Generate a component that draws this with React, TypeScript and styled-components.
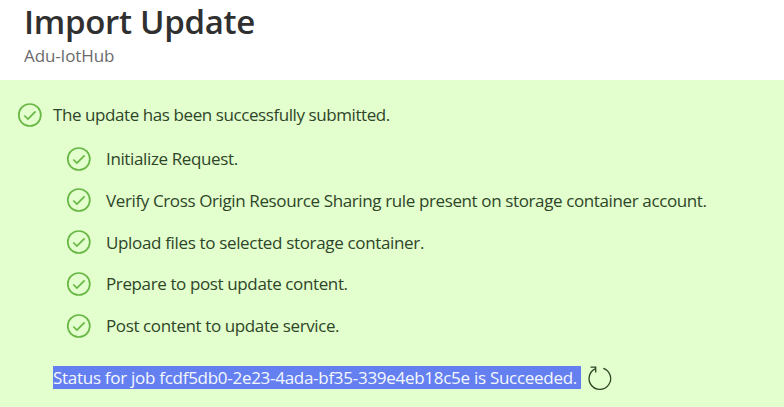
import React from "react";
import styled, { createGlobalStyle } from "styled-components";

const GlobalStyle = createGlobalStyle`
  html, body { margin: 0; background: #fff; }
  body { font-family: "Open Sans", "Noto Sans", sans-serif; overflow: hidden; }
`;

const Page = styled.main`
  width: 784px;
  height: 407px;
  display: flex;
  flex-direction: column;
  overflow: hidden;
`;

const Header = styled.header`
  height: 80px;
  flex: none;
  padding-left: 24px;
  box-sizing: border-box;
`;

const Title = styled.h1`
  margin: 0;
  height: 44px;
  line-height: 43px;
  font-size: 33px;
  font-weight: 600;
  letter-spacing: -0.3px;
  color: #303030;
  white-space: nowrap;
`;

const Subtitle = styled.div`
  height: 24px;
  line-height: 24px;
  font-size: 17px;
  letter-spacing: -0.12px;
  color: #6b6b6b;
  white-space: nowrap;
`;

const Panel = styled.section`
  flex: 1;
  background: #e2ffcd;
  padding: 22px 0 0 17px;
`;

const Row = styled.div<{ $gap: number }>`
  display: flex;
  align-items: center;
  gap: ${(p) => p.$gap}px;
  height: 26px;
`;

const Steps = styled.ul`
  list-style: none;
  margin: 18px 0 0 49px;
  padding: 0;
  display: grid;
  grid-template-rows: repeat(5, 41.75px);
`;

const Label = styled.span<{ $spacing: number }>`
  font-size: 17px;
  line-height: 26px;
  letter-spacing: ${(p) => p.$spacing}px;
  color: #2f4529;
  white-space: nowrap;
`;

const StatusRow = styled.div`
  display: flex;
  align-items: center;
  gap: 6px;
  margin: 11px 0 0 36px;
  height: 24px;
`;

const Highlight = styled.span`
  width: 528px;
  height: 23px;
  line-height: 23px;
  background: #6480f0;
  color: #f4f8ff;
  font-size: 17px;
  letter-spacing: -0.28px;
  white-space: nowrap;
`;

const Icon = styled.svg`
  flex: none;
  display: block;
  fill: none;
`;

const CheckIcon = () => (
  <Icon width="25" height="25" viewBox="0 0 25 25" stroke="#68b744" strokeWidth="1.7">
    <circle cx="12.8" cy="12" r="11" />
    <path d="M7.3 12.5l3.6 3.5 7.7-7.6" />
  </Icon>
);

const RefreshIcon = () => (
  <Icon width="26" height="26" viewBox="0 0 26 26" stroke="#2d4322" strokeWidth="1.3">
    <path d="M16.3 3.3A10.8 10.8 0 1 1 8 3.9" />
    <path d="M3.5 2.2h5.2v5.2" />
  </Icon>
);

const steps = [
  { text: "Initialize Request.", spacing: -0.37 },
  { text: "Verify Cross Origin Resource Sharing rule present on storage container account.", spacing: -0.38 },
  { text: "Upload files to selected storage container.", spacing: -0.34 },
  { text: "Prepare to post update content.", spacing: -0.38 },
  { text: "Post content to update service.", spacing: -0.39 },
];

export default function App() {
  return (
    <Page>
      <GlobalStyle />
      <Header>
        <Title>Import Update</Title>
        <Subtitle>Adu-IotHub</Subtitle>
      </Header>
      <Panel>
        <Row $gap={11}>
          <CheckIcon />
          <Label $spacing={-0.42}>The update has been successfully submitted.</Label>
        </Row>
        <Steps>
          {steps.map((s) => (
            <li key={s.text}>
              <Row $gap={15}>
                <CheckIcon />
                <Label $spacing={s.spacing}>{s.text}</Label>
              </Row>
            </li>
          ))}
        </Steps>
        <StatusRow>
          <Highlight>Status for job fcdf5db0-2e23-4ada-bf35-339e4eb18c5e is Succeeded.</Highlight>
          <RefreshIcon />
        </StatusRow>
      </Panel>
    </Page>
  );
}
